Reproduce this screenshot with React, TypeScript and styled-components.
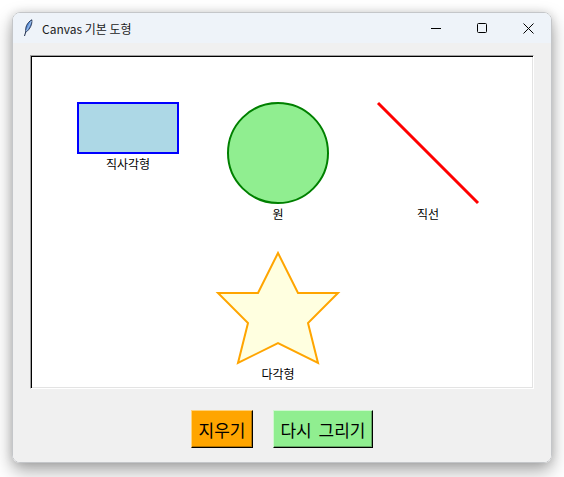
import React from "react";
import styled, { createGlobalStyle } from "styled-components";

const GlobalStyle = createGlobalStyle`
  html, body {
    margin: 0;
    padding: 0;
    background: #ffffff;
  }
  body {
    font-family: "Noto Sans CJK KR", "Noto Sans", sans-serif;
  }
`;

const Page = styled.div`
  padding: 12px;
  width: 564px;
  height: 477px;
  box-sizing: border-box;
  overflow: hidden;
`;

const Window = styled.div`
  width: 540px;
  height: 451px;
  box-sizing: border-box;
  border: 1px solid #c4c6c9;
  border-radius: 8px;
  overflow: hidden;
  display: flex;
  flex-direction: column;
  box-shadow: 0 8px 18px rgba(0, 0, 0, 0.34), 0 0 8px rgba(0, 0, 0, 0.12);
`;

const TitleBar = styled.div`
  height: 30px;
  flex: 0 0 30px;
  background: #eef3f9;
  display: flex;
  align-items: center;
`;

const AppIcon = styled.svg`
  margin-left: 10px;
  width: 10px;
  height: 18px;
  flex: 0 0 auto;
`;

const Title = styled.span`
  margin-left: 9px;
  font-family: "Noto Sans CJK KR", "Open Sans", sans-serif;
  font-size: 12px;
  color: #1b1b1b;
  flex: 1;
`;

const Controls = styled.div`
  display: flex;
  height: 100%;
`;

const CaptionButton = styled.div`
  width: 46px;
  height: 100%;
  display: flex;
  align-items: center;
  justify-content: center;
`;

const Body = styled.div`
  flex: 1;
  background: #f0f0f0;
  padding: 12px 17px 0;
  display: flex;
  flex-direction: column;
  align-items: center;
`;

const Canvas = styled.div`
  width: 500px;
  height: 330px;
  flex: 0 0 auto;
  border: 1px solid;
  border-color: #a0a0a0 #ffffff #ffffff #a0a0a0;
  box-shadow: inset 1px 1px 0 #000000, inset -1px -1px 0 #e3e3e3;
  padding: 1px;
  box-sizing: content-box;
  background: #ffffff;
  display: flex;
`;

const Drawing = styled.svg`
  width: 500px;
  height: 330px;
  display: block;
`;

const Label = styled.text`
  font-family: "Noto Sans CJK KR", "Noto Sans", sans-serif;
  font-size: 12px;
  fill: #000000;
`;

const ButtonRow = styled.div`
  margin-top: 21px;
  display: flex;
  gap: 20px;
`;

const TkButton = styled.button<{ $bg: string; $light: string; $dark: string; $width: number }>`
  width: ${(p) => p.$width}px;
  height: 38px;
  padding: 0;
  box-sizing: border-box;
  background: ${(p) => p.$bg};
  border: 1px solid;
  border-color: ${(p) => p.$light} #000000 #000000 ${(p) => p.$light};
  box-shadow: inset -1px -1px 0 ${(p) => p.$dark};
  font-family: "Noto Sans CJK KR", "Noto Sans", sans-serif;
  font-size: 17px;
  word-spacing: 3px;
  color: #000000;
  line-height: 1;
  text-align: center;
  cursor: pointer;
`;

const starPoints = [
  [250, 200], [270, 240], [310, 240], [280, 270], [290, 310],
  [250, 290], [210, 310], [220, 270], [190, 240], [230, 240],
]
  .map((p) => p.join(","))
  .join(" ");

export default function App() {
  return (
    <>
      <GlobalStyle />
      <Page>
        <Window>
          <TitleBar>
            <AppIcon viewBox="0 0 10 18">
              <path d="M1.5 17 L3 12" stroke="#1c2b4a" strokeWidth="1" fill="none" />
              <path
                d="M3 13 C1.8 9 4 3.5 8.8 0.8 C9.4 5 7 10.5 3 13 Z"
                fill="#5b8fd8"
                stroke="#1c2b4a"
                strokeWidth="0.9"
              />
              <path d="M3.2 12.5 C5 9 6.5 6 8.4 2" stroke="#c9dcf5" strokeWidth="0.7" fill="none" />
            </AppIcon>
            <Title>Canvas 기본 도형</Title>
            <Controls>
              <CaptionButton>
                <svg width="10" height="10" viewBox="0 0 10 10">
                  <path d="M0 5.5 H10" stroke="#000" strokeWidth="1" />
                </svg>
              </CaptionButton>
              <CaptionButton>
                <svg width="10" height="10" viewBox="0 0 10 10">
                  <rect x="0.5" y="0.5" width="9" height="9" rx="1" stroke="#000" strokeWidth="1" fill="none" />
                </svg>
              </CaptionButton>
              <CaptionButton>
                <svg width="11" height="11" viewBox="0 0 11 11">
                  <path d="M0.5 0.5 L10.5 10.5 M10.5 0.5 L0.5 10.5" stroke="#000" strokeWidth="1" />
                </svg>
              </CaptionButton>
            </Controls>
          </TitleBar>
          <Body>
            <Canvas>
              <Drawing viewBox="4 4 500 330">
                <rect x="50" y="50" width="100" height="50" fill="#add8e6" stroke="#0000ff" strokeWidth="2" />
                <Label x="100" y="110" textAnchor="middle" dominantBaseline="central">직사각형</Label>
                <circle cx="250" cy="100" r="50" fill="#90ee90" stroke="#008000" strokeWidth="2" />
                <Label x="250" y="160" textAnchor="middle" dominantBaseline="central">원</Label>
                <line x1="350" y1="50" x2="450" y2="150" stroke="#ff0000" strokeWidth="3" />
                <Label x="400" y="160" textAnchor="middle" dominantBaseline="central">직선</Label>
                <polygon points={starPoints} fill="#ffffe0" stroke="#ffa500" strokeWidth="2" />
                <Label x="250" y="320" textAnchor="middle" dominantBaseline="central">다각형</Label>
              </Drawing>
            </Canvas>
            <ButtonRow>
              <TkButton $bg="#ffa500" $light="#ffd27a" $dark="#b37400" $width={62}>지우기</TkButton>
              <TkButton $bg="#90ee90" $light="#d0f8d0" $dark="#64a664" $width={100}>다시 그리기</TkButton>
            </ButtonRow>
          </Body>
        </Window>
      </Page>
    </>
  );
}
